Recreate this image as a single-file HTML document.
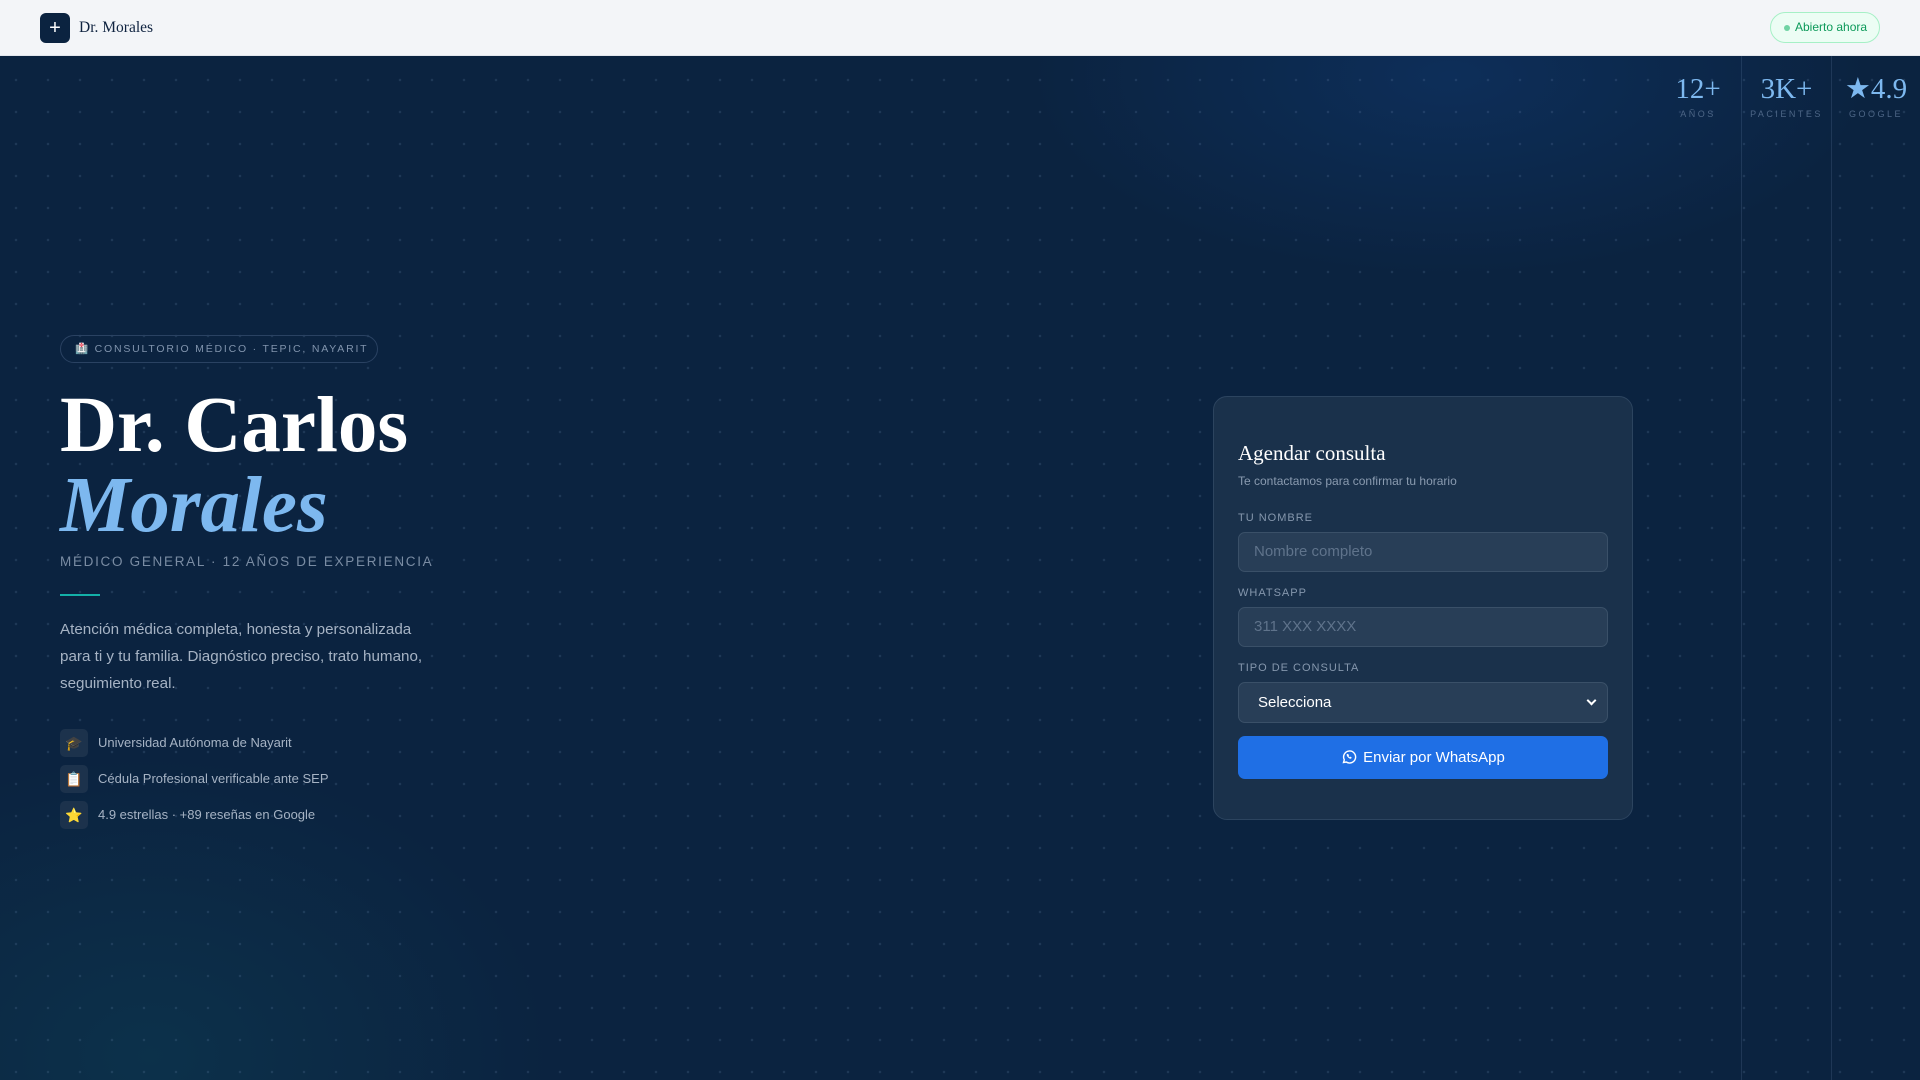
<!DOCTYPE html>
<html><head><meta charset="utf-8"><style>
*{margin:0;padding:0;box-sizing:border-box}
body{width:1920px;height:1080px;overflow:hidden;font-family:"Liberation Sans",sans-serif;background:#0b2340;position:relative}
.nav{position:absolute;left:0;top:0;width:1920px;height:56px;background:#f3f5f8;border-bottom:1px solid #e2e6ec;z-index:3}
.logo{position:absolute;left:40px;top:13px;width:30px;height:30px;border-radius:6px;background:#0b2340;color:#fff;font-size:20px;line-height:30px;text-align:center}
.brand{position:absolute;left:79px;top:19px;font-family:"Liberation Serif",serif;font-size:15.5px;line-height:18px;color:#0f2340}
.open{position:absolute;left:1770px;top:12px;width:110px;height:31px;border:1px solid #a6f0c6;border-radius:16px;background:#ecfdf4;color:#0d9a5a;font-size:12px;line-height:29px;padding-left:24px}
.open:before{content:"";position:absolute;left:13px;top:12px;width:6px;height:6px;border-radius:50%;background:#6fd3a3}
.hero{position:absolute;left:0;top:56px;width:1920px;height:1024px;
background:
radial-gradient(circle,rgba(120,150,190,.18) 1px,transparent 1.5px) 0 8px/32px 32px,
radial-gradient(ellipse 420px 200px at 1450px 20px,rgba(16,60,120,.45),transparent),
radial-gradient(ellipse 400px 300px at 150px 1000px,rgba(14,70,90,.4),transparent),
#0b2340}
.stat{position:absolute;top:56px;height:1024px;text-align:center;border-left:1px solid rgba(120,150,190,.18)}
.stat b{display:block;font-family:"Liberation Serif",serif;font-weight:normal;font-size:29px;line-height:34px;height:34px;color:#7db8ef;margin-top:16px}
.stat i{display:block;font-style:normal;font-size:9px;line-height:10px;letter-spacing:2.5px;color:#4d6686;margin-top:3px}
.pill{position:absolute;left:60px;top:335px;width:318px;height:28px;border:1px solid #2a4262;border-radius:14px;color:#8194ad;font-size:10.5px;letter-spacing:1.8px;line-height:26px;padding-left:14px;white-space:nowrap}
h1{position:absolute;left:60px;top:386px;font-family:"Liberation Serif",serif;font-weight:bold;font-size:79px;line-height:80px;color:#fff}
h1 em{color:#7db8ef}
.sub{position:absolute;left:60px;top:554px;font-size:13.5px;letter-spacing:1.7px;color:#7a8ca3;white-space:nowrap}
.bar{position:absolute;left:60px;top:594px;width:40px;height:2px;background:#14b0a8}
.p{position:absolute;left:60px;top:616px;width:380px;font-size:15.2px;line-height:27px;color:#a6b3c4}
.li{position:absolute;left:60px;height:28px;font-size:13px;color:#a6b3c4;line-height:28px;padding-left:38px}
.li span{position:absolute;left:0;top:0;width:28px;height:28px;border-radius:5px;background:#1c324c;text-align:center;font-size:14px;line-height:28px}
.card{position:absolute;left:1213px;top:396px;width:420px;height:424px;border:1px solid #2c445f;border-radius:14px;background:#1a314b;padding:0 24px}
.card h2{font-family:"Liberation Serif",serif;font-weight:normal;font-size:21px;color:#fff;margin-top:44px}
.card .s{font-size:12px;color:#8a9bb0;margin-top:8px}
.lab{font-size:11px;letter-spacing:1px;color:#8597ad;margin-top:15px}
.lab.f{margin-top:24px}
.in{height:40px;margin-top:8px;border:1px solid #3a5068;border-radius:7px;background:#283e57;color:#5f738b;font-size:15px;line-height:38px;padding-left:15px}
.sel{color:#fff;padding-left:19px;height:41px;line-height:39px;position:relative}
.sel:after{content:"";position:absolute;right:12px;top:14px;width:5px;height:5px;border-right:2px solid #fff;border-bottom:2px solid #fff;transform:rotate(45deg)}
.btn{height:43px;margin-top:13px;border-radius:7px;background:#1f6fe5;color:#fff;font-size:15px;line-height:43px;text-align:center}
.btn svg{vertical-align:-3px;margin-right:6px}
</style></head><body>
<div class="nav"><div class="logo">+</div><div class="brand">Dr. Morales</div><div class="open">Abierto ahora</div></div>
<div class="hero"></div>
<div class="stat" style="left:1655px;width:86px;border-left:none"><b>12+</b><i>AÑOS</i></div>
<div class="stat" style="left:1741px;width:90px"><b>3K+</b><i>PACIENTES</i></div>
<div class="stat" style="left:1831px;width:89px"><b>★4.9</b><i>GOOGLE</i></div>
<div class="pill">🏥 CONSULTORIO MÉDICO · TEPIC, NAYARIT</div>
<h1>Dr. Carlos<br><em>Morales</em></h1>
<div class="sub">MÉDICO GENERAL · 12 AÑOS DE EXPERIENCIA</div>
<div class="bar"></div>
<div class="p">Atención médica completa, honesta y personalizada para ti y tu familia. Diagnóstico preciso, trato humano, seguimiento real.</div>
<div class="li" style="top:729px"><span>🎓</span>Universidad Autónoma de Nayarit</div>
<div class="li" style="top:765px"><span>📋</span>Cédula Profesional verificable ante SEP</div>
<div class="li" style="top:801px"><span>⭐</span>4.9 estrellas · +89 reseñas en Google</div>
<div class="card">
<h2>Agendar consulta</h2>
<div class="s">Te contactamos para confirmar tu horario</div>
<div class="lab f">TU NOMBRE</div><div class="in">Nombre completo</div>
<div class="lab">WHATSAPP</div><div class="in">311 XXX XXXX</div>
<div class="lab">TIPO DE CONSULTA</div><div class="in sel">Selecciona</div>
<div class="btn"><svg width="16" height="16" viewBox="0 0 16 16" fill="none" stroke="#fff" stroke-width="1.4"><path d="M2.5 13.5l.8-2.7A6 6 0 1 1 5.3 13z"/><path d="M6 5.2c-.3.6 0 1.8 1.1 3 1.1 1.1 2.3 1.5 2.9 1.2l.5-.8-1.2-.7-.6.5c-.6-.3-1.1-.8-1.4-1.4l.5-.6-.7-1.2z" fill="#fff" stroke-width=".5"/></svg>Enviar por WhatsApp</div>
</div>
</body></html>
